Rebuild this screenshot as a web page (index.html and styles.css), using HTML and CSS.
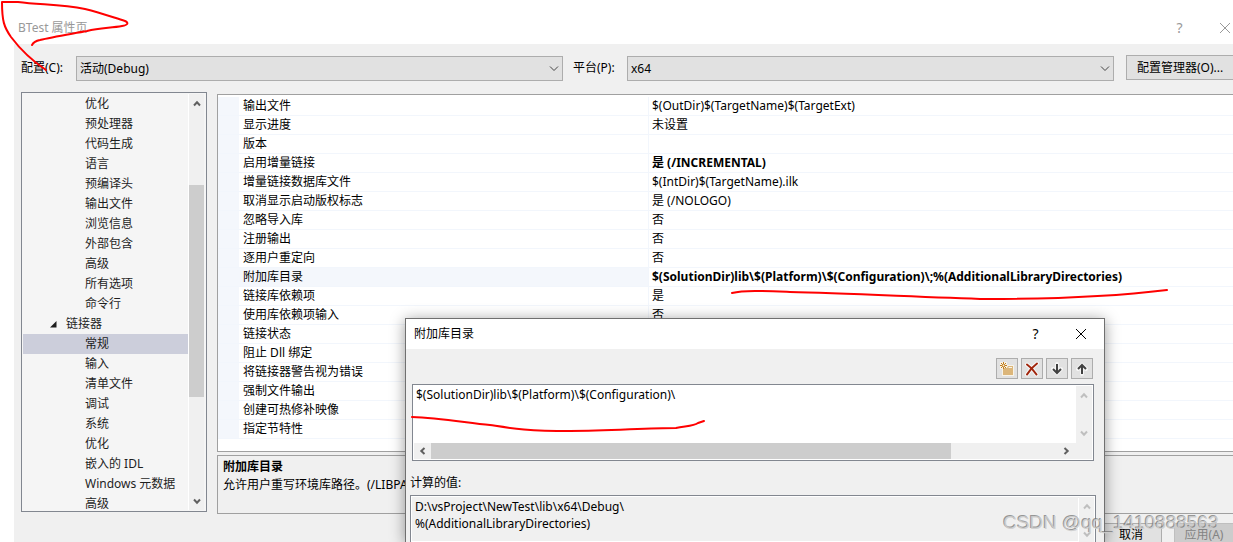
FILE: index.html
```html
<!DOCTYPE html>
<html lang="zh-CN">
<head>
<meta charset="utf-8">
<title>BTest 属性页</title>
<link rel="stylesheet" href="styles.css">
</head>
<body>
<svg class="symbols" aria-hidden="true">
  <symbol id="chev-up" viewBox="0 0 8 7"><path d="M1 5.5 4 2.300 7 5.500" /></symbol>
  <symbol id="chev-down" viewBox="0 0 8 7"><path d="M1 1.500 4 4.700 7 1.500" /></symbol>
  <symbol id="chev-left" viewBox="0 0 7 8"><path d="M5.500 1 2.300 4 5.500 7" /></symbol>
  <symbol id="chev-right" viewBox="0 0 7 8"><path d="M1.500 1 4.700 4 1.500 7" /></symbol>
  <symbol id="cross" viewBox="0 0 12 12"><path d="M1 1 11 11M11 1 1 11" /></symbol>
</svg>
<div class="window">
  <header class="titlebar">
    <h1 class="window-title">BTest 属性页</h1>
    <button class="caption-btn" type="button" aria-label="帮助">?</button>
    <button class="caption-btn" type="button" aria-label="关闭"><svg class="cross"><use href="#cross"/></svg></button>
  </header>
  <div class="client">
    <div class="config-row">
      <label class="config-label" for="config">配置(C):</label>
      <div class="select-wrap"><select class="select" id="config"><option>活动(Debug)</option></select><svg class="select-arrow"><path d="M1 1.500 5 5.500 9 1.500"/></svg></div>
      <label class="platform-label" for="platform">平台(P):</label>
      <div class="select-wrap"><select class="select" id="platform"><option>x64</option></select><svg class="select-arrow"><path d="M1 1.500 5 5.500 9 1.500"/></svg></div>
      <button class="manager-btn" type="button">配置管理器(O)...</button>
    </div>
    <main class="panes">
      <nav class="tree">
        <ul class="tree-list">
          <li class="leaf">优化</li><li class="leaf">预处理器</li><li class="leaf">代码生成</li><li class="leaf">语言</li>
          <li class="leaf">预编译头</li><li class="leaf">输出文件</li><li class="leaf">浏览信息</li><li class="leaf">外部包含</li>
          <li class="leaf">高级</li><li class="leaf">所有选项</li><li class="leaf">命令行</li>
          <li class="branch"><svg class="expander"><path d="M6.500 0V6.500H0Z"/></svg>链接器</li>
          <li class="leaf selected">常规</li><li class="leaf">输入</li><li class="leaf">清单文件</li><li class="leaf">调试</li>
          <li class="leaf">系统</li><li class="leaf">优化</li><li class="leaf">嵌入的 IDL</li><li class="leaf">Windows 元数据</li><li class="leaf">高级</li>
        </ul>
        <div class="vscroll tree-scroll"><svg class="chev"><use href="#chev-up"/></svg><div class="tree-track"><div class="thumb"></div></div><svg class="chev"><use href="#chev-down"/></svg></div>
      </nav>
      <section class="details">
        <div class="grid-box">
          <table class="props">
            <colgroup><col class="col-gutter"><col class="col-name"><col></colgroup>
            <tbody>
              <tr><td></td><th>输出文件</th><td>$(OutDir)$(TargetName)$(TargetExt)</td></tr>
              <tr><td></td><th>显示进度</th><td>未设置</td></tr>
              <tr><td></td><th>版本</th><td></td></tr>
              <tr><td></td><th>启用增量链接</th><td class="strong">是 (/INCREMENTAL)</td></tr>
              <tr><td></td><th>增量链接数据库文件</th><td>$(IntDir)$(TargetName).ilk</td></tr>
              <tr><td></td><th>取消显示启动版权标志</th><td>是 (/NOLOGO)</td></tr>
              <tr><td></td><th>忽略导入库</th><td>否</td></tr>
              <tr><td></td><th>注册输出</th><td>否</td></tr>
              <tr><td></td><th>逐用户重定向</th><td>否</td></tr>
              <tr class="current"><td></td><th>附加库目录</th><td class="strong">$(SolutionDir)lib\$(Platform)\$(Configuration)\;%(AdditionalLibraryDirectories)</td></tr>
              <tr><td></td><th>链接库依赖项</th><td>是</td></tr>
              <tr><td></td><th>使用库依赖项输入</th><td>否</td></tr>
              <tr><td></td><th>链接状态</th><td></td></tr>
              <tr><td></td><th>阻止 Dll 绑定</th><td></td></tr>
              <tr><td></td><th>将链接器警告视为错误</th><td></td></tr>
              <tr><td></td><th>强制文件输出</th><td></td></tr>
              <tr><td></td><th>创建可热修补映像</th><td></td></tr>
              <tr><td></td><th>指定节特性</th><td></td></tr>
            </tbody>
          </table>
        </div>
        <div class="help-box">
          <h2 class="help-title">附加库目录</h2>
          <p class="help-text">允许用户重写环境库路径。(/LIBPA</p>
        </div>
      </section>
    </main>
    <footer class="actions">
      <button class="action" type="button">取消</button>
      <button class="action" type="button" disabled>应用(A)</button>
    </footer>
  </div>
</div>

<section class="dialog" role="dialog" aria-labelledby="dlg-title">
  <header class="dialog-bar">
    <h2 class="dialog-title" id="dlg-title">附加库目录</h2>
    <button class="caption-btn" type="button" aria-label="帮助">?</button>
    <button class="caption-btn" type="button" aria-label="关闭"><svg class="cross"><use href="#cross"/></svg></button>
  </header>
  <div class="dialog-body">
    <div class="tools">
      <button class="tool" type="button" aria-label="新行"><svg class="tool-icon" viewBox="0 0 16 16"><path fill="#f7f3e9" d="M1 1H8V4H15V15H3V8H1Z"/><path fill="#dcb67a" d="M4 7H8L9 5H14V14H4Z"/><path stroke="#f7f3e9" d="M9.500 6.500H13"/><path stroke="#c27d1a" d="M4.500 1V8M1 4.500H8M2 2 7 7M7 2 2 7"/><circle cx="4.500" cy="4.500" r="1" fill="#f7f3e9"/></svg></button>
      <button class="tool" type="button" aria-label="删除"><svg class="tool-icon" viewBox="0 0 16 16"><path class="delete-halo" d="M3 3.500C6 5.500 10 9.500 12.500 13.500M13 2.500C9 5.500 5 10 3 13.500"/><path class="delete-mark" d="M3 3.500C6 5.500 10 9.500 12.500 13.500M13 2.500C9 5.500 5 10 3 13.500"/></svg></button>
      <button class="tool" type="button" aria-label="下移"><svg class="tool-icon" viewBox="0 0 16 16"><path class="arrow-halo" d="M8 3V12M4 8 8 12 12 8"/><path class="arrow-mark" d="M8 3V12M4 8 8 12 12 8"/></svg></button>
      <button class="tool" type="button" aria-label="上移"><svg class="tool-icon" viewBox="0 0 16 16"><path class="arrow-halo" d="M8 13V4M4 8 8 4 12 8"/><path class="arrow-mark" d="M8 13V4M4 8 8 4 12 8"/></svg></button>
    </div>
    <div class="editor">
      <div class="editor-main">
        <textarea class="editor-text" aria-label="附加库目录" wrap="off">$(SolutionDir)lib\$(Platform)\$(Configuration)\</textarea>
        <div class="vscroll faded"><svg class="chev"><use href="#chev-up"/></svg><svg class="chev"><use href="#chev-down"/></svg></div>
      </div>
      <div class="hscroll"><svg class="chev-side"><use href="#chev-left"/></svg><div class="htrack"><div class="hthumb"></div></div><svg class="chev-side"><use href="#chev-right"/></svg></div>
    </div>
    <label class="computed-label" for="computed">计算的值:</label>
    <div class="computed">
      <textarea class="computed-text" id="computed" readonly>D:\vsProject\NewTest\lib\x64\Debug\
%(AdditionalLibraryDirectories)</textarea>
      <div class="vscroll faded"><svg class="chev"><use href="#chev-up"/></svg><svg class="chev"><use href="#chev-down"/></svg></div>
    </div>
  </div>
</section>

<svg class="ink" aria-hidden="true">
  <path d="M46 70C34 62 20 49 11 37C4 27 2 21 2 2L18 2C40 5 60 4 85 9C101 13 112 17 125 21C129 23 128 25 122 26C111 28 100 28 87 31C71 34 52 37 40 40C35 41 33 43 32 45"/>
  <path d="M732 293C744 290 765 291 790 292C845 293 920 297 988 299C1050 299 1110 297 1167 290"/>
  <path d="M412 417C440 418 468 423 490 425C510 428 525 431 570 431C610 431 645 428 676 428C686 426 694 426 698 423L704 421"/>
</svg>
<div class="watermark">CSDN @qq_1410888563</div>
</body>
</html>
```
FILE: styles.css
```css
* { box-sizing: border-box; }
body {
  margin: 0;
  overflow: hidden;
  background: #fff;
  color: #000;
  font: 12px/20px "Noto Sans", "Noto Sans CJK SC", sans-serif;
}
h1, h2, p, ul { margin: 0; padding: 0; font-size: 12px; font-weight: 400; }
button, select, textarea { font: inherit; color: inherit; border-radius: 0; margin: 0; }
svg { display: block; fill: none; flex: none; }
.symbols { position: absolute; width: 0; height: 0; }

.window { height: 100vh; display: flex; flex-direction: column; padding-left: 14px; overflow: hidden; }
.titlebar { flex: none; height: 44px; display: flex; align-items: flex-end; padding: 0 0 6px 4px; color: #999; }
.window-title { flex: 1; }
.caption-btn {
  width: 45px; height: 20px; padding: 0; border: 0; background: none;
  display: flex; align-items: center; justify-content: center; font-size: 14px;
}
.titlebar .caption-btn:last-child { margin-right: -14px; }
.cross { width: 12px; height: 12px; stroke: currentColor; }

.client { flex: 1; min-height: 0; display: flex; flex-direction: column; background: #f0f0f0; padding-left: 7px; }
.config-row { flex: none; height: 48px; display: flex; align-items: flex-start; padding-top: 11px; }
.config-label { width: 55px; padding-top: 3px; }
.platform-label { width: 64px; padding: 3px 0 0 10px; }
.select-wrap { position: relative; flex: 1; margin-top: 1px; }
.select {
  display: block; width: 100%; height: 25px; padding: 0 3px;
  appearance: none; border: 1px solid #adadad; background: #e1e1e1;
}
.select-arrow { position: absolute; right: 4px; top: 9px; width: 10px; height: 7px; stroke: #444; pointer-events: none; }
.manager-btn {
  width: 107px; height: 25px; margin-left: 12px; padding: 0 0 0 10px;
  border: 1px solid #adadad; border-right: 0; background: #e1e1e1; text-align: left; white-space: nowrap;
}

.panes { flex: 1; min-height: 0; display: flex; gap: 10px; }
.tree {
  width: 186px; margin-bottom: 2px; padding: 1px; display: flex; overflow: hidden;
  border: 1px solid #828790; background: #f5f5f5; color: #1e1e1e;
}
.tree-list { flex: 1; min-width: 0; list-style: none; }
.leaf, .branch { height: 20px; white-space: nowrap; }
.leaf { padding-left: 62px; }
.branch { display: flex; align-items: center; gap: 9px; padding-left: 27px; }
.expander { width: 7px; height: 7px; fill: #1e1e1e; }
.selected { background: #cccedb; }
.vscroll {
  width: 16px; display: flex; flex-direction: column; align-items: center; justify-content: space-between;
  padding: 6px 0; background: #f0f0f0; stroke: #606060; stroke-width: 2px;
}
.tree-scroll { margin-right: 1px; padding-bottom: 5px; border-left: 1px solid #fff; }
.chev { width: 8px; height: 7px; }
.chev-side { width: 7px; height: 8px; }
.tree-track { flex: 1; align-self: stretch; padding: 78px 0 101px; }
.thumb { height: 100%; background: #cdcdcd; }
.faded { stroke: #bfbfbf; }

.details { flex: 1; min-width: 0; display: flex; flex-direction: column; gap: 3px; padding-top: 2px; }
.grid-box { flex: 1; min-height: 0; padding-top: 2px; overflow: hidden; border: 1px solid #a0a0a0; border-right: 0; background: #fff; }
.props { width: 100%; table-layout: fixed; border-collapse: separate; border-spacing: 0; line-height: 18px; }
.col-gutter { width: 21px; }
.col-name { width: 409px; }
.props tr { height: 19px; }
.props th, .props td { padding: 0 4px; border-bottom: 1px solid #f2f6fc; font-weight: 400; text-align: left; white-space: nowrap; }
.props td:last-child { padding-left: 3px; border-left: 1px solid #f2f6fc; }
.props td:first-child, .props .current th { background: #f4f7fc; }
.props .strong { font-weight: 700; }
.help-box { flex: none; height: 59px; padding: 2px 5px; border: 1px solid #a0a0a0; border-right: 0; line-height: 18px; }
.help-title { font-weight: 700; }

.actions { flex: none; height: 28px; padding-top: 9px; display: flex; justify-content: flex-end; gap: 12px; }
.action { width: 62px; padding: 3px 0 0; border: 1px solid #adadad; border-bottom: 0; background: #e1e1e1; line-height: 15px; }
.action:disabled { width: 59px; border-color: #bfbfbf; border-right: 0; background: #ccc; color: #838383; }

.dialog {
  position: absolute; left: 405px; top: 318px; bottom: 0; width: 700px;
  display: flex; flex-direction: column; overflow: hidden;
  border: 1px solid #707070; border-bottom: 0; background: #f0f0f0; box-shadow: 0 2px 14px rgba(0, 0, 0, .4);
}
.dialog-bar { flex: none; height: 30px; display: flex; align-items: center; padding: 0 1px 0 8px; background: #fff; }
.dialog-title { flex: 1; }
.dialog-body { flex: 1; min-height: 0; display: flex; flex-direction: column; padding: 9px 10px 0 6px; }
.tools { display: flex; justify-content: flex-end; gap: 3px; margin: 0 1px 5px 0; }
.tool { width: 22px; height: 21px; padding: 0; border: 1px solid #adadad; background: #e1e1e1; display: flex; align-items: center; justify-content: center; }
.tool-icon { width: 16px; height: 16px; }
.delete-halo, .arrow-halo { stroke: #f6f6f6; stroke-width: 4px; stroke-linecap: round; }
.delete-mark { stroke: #a1260d; stroke-width: 2px; stroke-linecap: round; }
.arrow-mark { stroke: #424242; stroke-width: 2px; }
.editor { flex: none; height: 77px; padding: 1px; border: 1px solid #828790; background: #fff; }
.editor-main { height: 57px; display: flex; }
.editor-text, .computed-text { flex: 1; padding: 0 2px; border: 0; outline: 0; resize: none; overflow: hidden; background: none; line-height: 17px; }
.hscroll { height: 16px; padding: 0 22px 0 5px; display: flex; align-items: center; gap: 5px; background: #f0f0f0; stroke: #606060; stroke-width: 2px; }
.htrack { flex: 1; align-self: stretch; }
.hthumb { width: 83%; height: 100%; background: #cdcdcd; }
.computed-label { margin: 12px 0 2px -2px; }
.computed { flex: 1; min-height: 0; margin: 0 -2px; padding: 2px 1px 0; display: flex; border: 1px solid #828790; border-bottom: 0; box-shadow: inset 0 0 0 1px #fff; }
.computed-text { padding-left: 3px; }
.computed .vscroll { padding: 5px 0 4px; border-left: 1px solid #fff; }

.ink { position: absolute; left: 0; top: 0; width: 100%; height: 100%; stroke: #f00; stroke-width: 2px; stroke-linecap: round; stroke-linejoin: round; pointer-events: none; }
.watermark {
  position: absolute; right: 14px; bottom: 7px; white-space: nowrap;
  font: 19px/24px "Liberation Sans", sans-serif; color: rgba(205, 205, 205, .9);
  text-shadow: -1px -1px 0 rgba(110, 110, 110, .7);
}
```
